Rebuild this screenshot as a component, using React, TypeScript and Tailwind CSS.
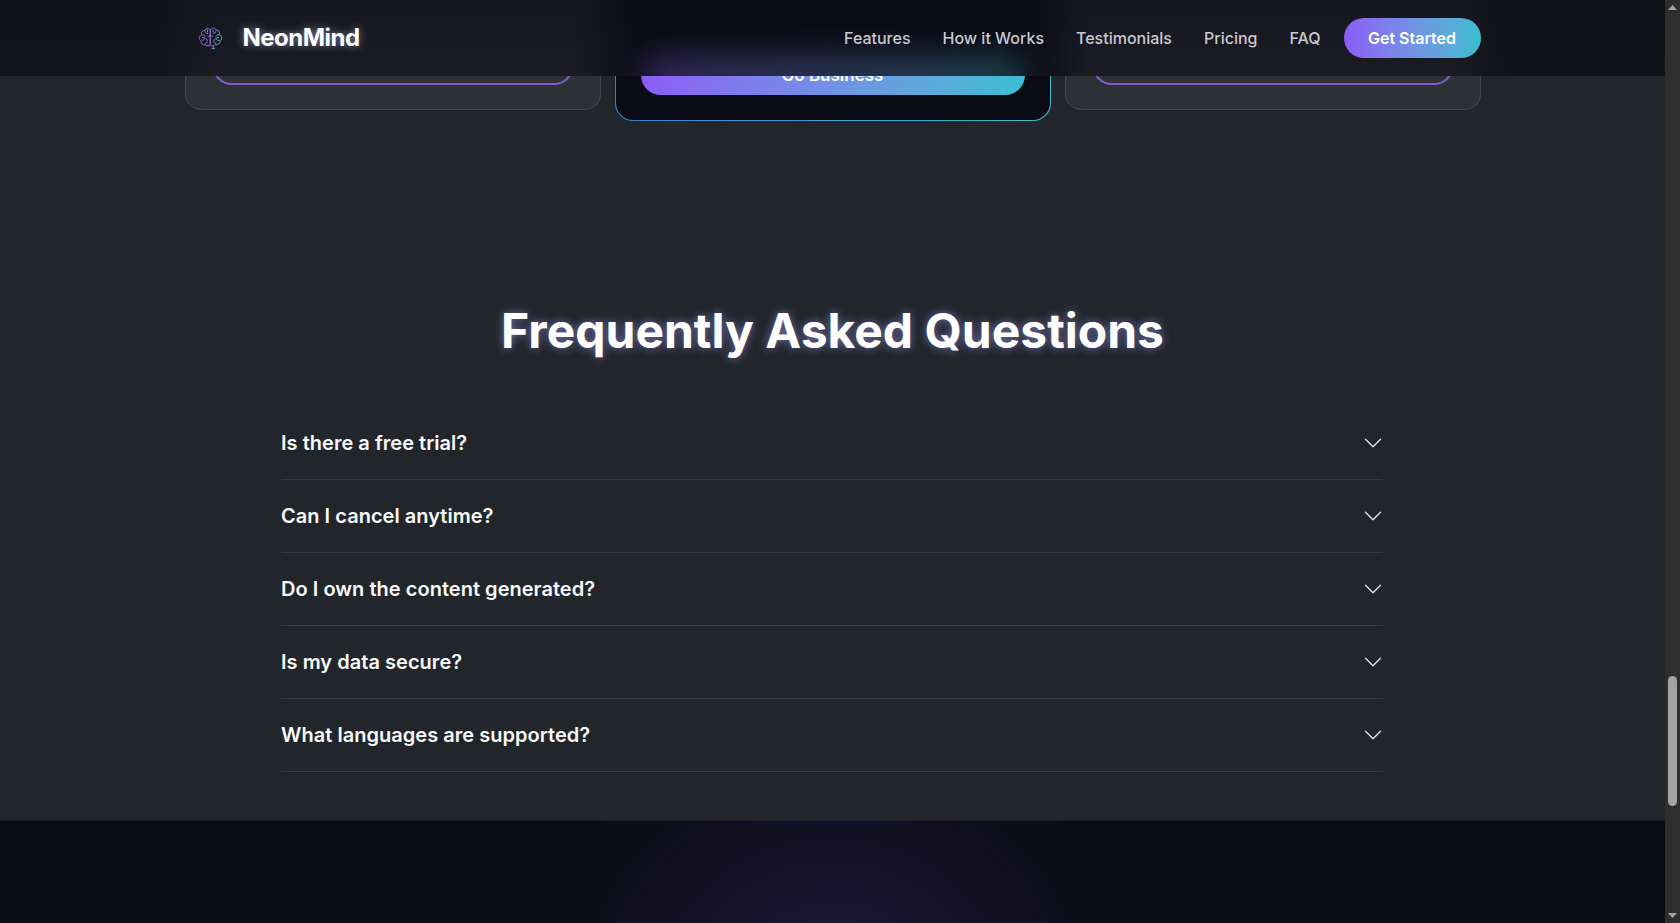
// App.tsx
import React from 'react';
import { BsChevronDown } from 'react-icons/bs';

const navLinks = ['Features', 'How it Works', 'Testimonials', 'Pricing', 'FAQ'];

const faqItems = [
  'Is there a free trial?',
  'Can I cancel anytime?',
  'Do I own the content generated?',
  'Is my data secure?',
  'What languages are supported?',
];

const BrainLogo: React.FC = () => (
  <svg viewBox="0 0 25 25" className="w-[25px] h-[25px] shrink-0" fill="none" strokeWidth="0.85" strokeLinecap="round" strokeLinejoin="round">
    <defs>
      <linearGradient id="brainGrad" x1="0" y1="0" x2="1" y2="0">
        <stop offset="0" stopColor="#c050e0" />
        <stop offset="0.45" stopColor="#8a90e0" />
        <stop offset="1" stopColor="#38d8c8" />
      </linearGradient>
    </defs>
    <g stroke="url(#brainGrad)">
      <path d="M12 3.6C10.4 1.8 7.6 2.4 6.8 4.4C4.6 4.4 3 6.2 3.4 8.4C1 9.8 .8 13.6 2.8 15C2.8 17.6 5 19.4 7.4 18.8C8.8 20.4 11 20.4 12 19.2Z" />
      <path d="M12.6 3.4C14 1.4 17 1.8 18 4C20.4 3.8 22.2 6 21.6 8.4C24.2 9.8 24.2 13.8 22.2 15.2C21.8 17.6 19.6 19.2 17.4 18.6C16.2 20.4 13.8 20.6 12.6 19.2Z" />
      <path d="M15.2 19.8V22.6M15.2 22.6H13.8M15.2 22.6H16.6" />
      <path d="M4 9C5.4 8.4 6.6 9 7 10.4M7 5.6C7.2 7.2 8.4 7.8 9.8 7.4M3.6 14.2C5 14.8 6.4 14 6.6 12.6M6.6 12.6C8 12.2 9 13 9.2 14.4M7.4 18.4C7.2 17 8 16 9.6 16M10 10C10.8 10.4 11.4 10.2 12 9.6M9.6 4.2V6M4.4 11.6H6" />
      <path d="M21 9C19.6 8.4 18.4 9 18 10.4M18 5C17.8 6.8 16.6 7.6 15.2 7.2M21.4 14.4C20 15 18.6 14.2 18.4 12.8M18.4 12.8C17 12.4 16 13.2 15.8 14.6M17.6 18.2C17.8 16.8 17 15.8 15.4 15.8M15 10C14.2 10.4 13.4 10.2 12.6 9.6M15 4V5.8M20.6 11.6H19" />
    </g>
  </svg>
);

// the frosted bar is painted by hand: cards showing through as soft bands, plus the glow of the button under it
const Header: React.FC = () => (
  <header className="absolute top-0 left-0 right-0 h-[76px] overflow-hidden bg-[linear-gradient(180deg,rgba(10,11,20,0.25),rgba(10,11,20,0)),linear-gradient(90deg,#13141c_160px,#1a1b23_215px,#1a1b23_575px,#0b0c15_640px,#0b0c15_1025px,#1a1b23_1090px,#1a1b23_1450px,#11121a_1510px)]">
    <div className="absolute left-1/2 -translate-x-1/2 top-[57px] w-[384px] h-[38px] rounded-[19px] bg-gradient-to-r from-[#8b5cf6] to-[#38bdd0] opacity-[0.33] blur-[16px]" />
    <div className="relative w-[1296px] h-full mx-auto flex items-center justify-between">
      <div className="flex items-center gap-5 pl-[13px]">
        <BrainLogo />
        <span className="text-2xl font-bold tracking-[-0.5px] text-white [text-shadow:0_0_8px_rgba(200,200,255,0.6)]">NeonMind</span>
      </div>
      <nav className="flex items-center gap-8">
        {navLinks.map(link => (
          <a key={link} className="text-base font-medium text-[#c9cad0]">{link}</a>
        ))}
        <button className="ml-[-9px] h-10 w-[137px] rounded-full bg-gradient-to-r from-[#8b5cf6] to-[#38bdd0] text-base font-semibold text-white">
          Get Started
        </button>
      </nav>
    </div>
  </header>
);

const SideCard: React.FC = () => (
  <div className="h-[110px] rounded-b-2xl border border-t-0 border-white/10 bg-white/5 flex items-end justify-center pb-6">
    <div className="w-[362px] h-10 rounded-b-[20px] border-2 border-t-0 border-[#7f5acb]" />
  </div>
);

const ScrollBar: React.FC = () => (
  <div className="w-[15px] h-full shrink-0 bg-[#2e2e2e] flex flex-col items-center">
    <svg viewBox="0 0 15 15" className="w-[15px] h-[15px] shrink-0">
      <path d="M7.5 5L12 10H3Z" fill="#a3a3a3" />
    </svg>
    <div className="w-[9px] h-[130px] mt-[661px] rounded-full bg-[#a3a3a3]" />
    <svg viewBox="0 0 15 15" className="w-[15px] h-[15px] shrink-0 mt-auto">
      <path d="M3 5H12L7.5 10Z" fill="#a3a3a3" />
    </svg>
  </div>
);

export default function App() {
  return (
    <div className="flex h-[923px] overflow-hidden bg-[#22262b] font-['Inter',sans-serif]">
      <div className="relative flex-1 min-w-0 flex flex-col">
        <Header />

        <section className="h-[820px] shrink-0">
          {/* Pricing cards, only the bottom edge is in view */}
          <div className="w-[1296px] mx-auto grid grid-cols-[416px_436px_416px] gap-[14px] items-start">
            <SideCard />
            <div className="h-[121px] rounded-b-[18px] p-px pt-0 bg-gradient-to-r from-[#3f7fd0] to-[#3fc0cc]">
              <div className="h-full rounded-b-[17px] bg-[#0a0b14] flex items-end justify-center pb-[25px]">
                <button className="w-[384px] h-[38px] rounded-b-[21px] rounded-t-[19px] bg-gradient-to-r from-[#8b5cf6] to-[#38bdd0] text-[17px] font-semibold text-white">
                  Go Business
                </button>
              </div>
            </div>
            <SideCard />
          </div>

          <h2 className="mt-[181px] text-center text-5xl leading-[58px] font-bold text-white [text-shadow:0_0_10px_rgba(160,160,255,0.6)]">
            Frequently Asked Questions
          </h2>

          <div className="w-[1102px] ml-[281px] mt-[47px]">
            {faqItems.map(q => (
              <div key={q} className="h-[73px] flex items-center justify-between border-b border-white/10 text-xl font-semibold tracking-[0.03px] text-[#f8f9fa]">
                <span>{q}</span>
                <BsChevronDown size={20} className="text-[#e5e5e5]" />
              </div>
            ))}
          </div>
        </section>

        <footer className="flex-1 border-t border-white/5 bg-[#0a0b14] bg-[radial-gradient(ellipse_300px_280px_at_50%_180px,rgba(139,92,246,0.18),transparent)]" />
      </div>
      <ScrollBar />
    </div>
  );
}
